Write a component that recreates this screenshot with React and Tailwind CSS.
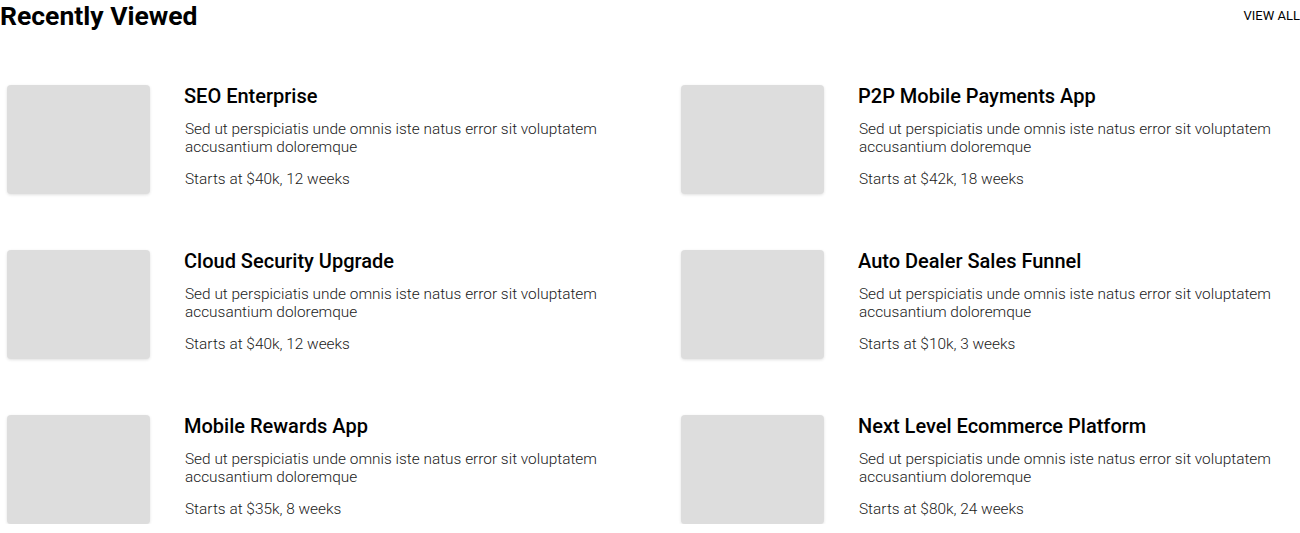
import React from 'react';

const projects = [
  { title: 'SEO Enterprise', price: 'Starts at $40k, 12 weeks' },
  { title: 'P2P Mobile Payments App', price: 'Starts at $42k, 18 weeks' },
  { title: 'Cloud Security Upgrade', price: 'Starts at $40k, 12 weeks' },
  { title: 'Auto Dealer Sales Funnel', price: 'Starts at $10k, 3 weeks' },
  { title: 'Mobile Rewards App', price: 'Starts at $35k, 8 weeks' },
  { title: 'Next Level Ecommerce Platform', price: 'Starts at $80k, 24 weeks' },
];

const blurb = 'Sed ut perspiciatis unde omnis iste natus error sit voluptatem accusantium doloremque';

const ProjectCard = ({ title, price }) => (
  <div className="flex items-start">
    <div className="ml-[7px] w-[143px] h-[109px] shrink-0 rounded bg-[#dddddd] shadow-[0_1px_3px_rgba(0,0,0,0.12)]"></div>
    <div className="ml-[34px] max-w-[450px]">
      <h3 className="text-[20px] leading-[22px] font-medium text-black">{title}</h3>
      <div className="pl-px text-[15.4px] leading-[18px] font-light text-[#1a1a1a]">
        <p className="mt-[13px]">{blurb}</p>
        <p className="mt-[14px]">{price}</p>
      </div>
    </div>
  </div>
);

export default function App() {
  return (
    <div className="w-[1300px] bg-white font-['Roboto',sans-serif]">
      {/* Header */}
      <div className="flex items-center justify-between h-[32px]">
        <h2 className="text-[26.5px] leading-[32px] font-bold text-black">Recently Viewed</h2>
        <span className="text-[13px] uppercase text-black">View all</span>
      </div>

      {/* Project grid */}
      <div className="grid grid-cols-[674px_1fr] gap-y-[56px] pt-[53px]">
        {projects.map((p) => (
          <ProjectCard key={p.title} title={p.title} price={p.price} />
        ))}
      </div>
    </div>
  );
}
